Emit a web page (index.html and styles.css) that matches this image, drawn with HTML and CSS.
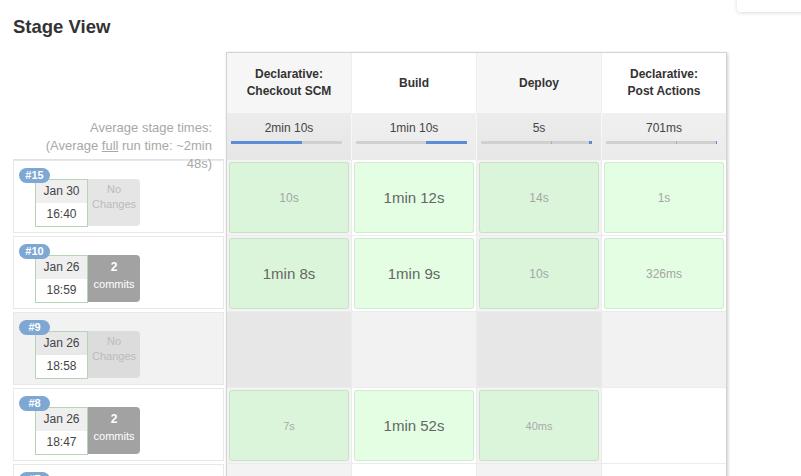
FILE: index.html
```html
<!DOCTYPE html>
<html>
<head>
<meta charset="utf-8">
<link rel="stylesheet" href="styles.css">
</head>
<body>
<div class="corner"></div>
<h2 class="title">Stage View</h2>
<div class="stage-view">
  <div class="jobs">
    <div class="jobs-head"></div>
    <div class="avg-label">Average stage times:<br>(Average <span class="u">full</span> run time: ~2min<br>48s)</div>
    <div class="job">
      <span class="badge">#15</span>
      <div class="build">
        <div class="date"><div class="d">Jan 30</div><div class="t">16:40</div></div>
        <div class="changes none">No<br>Changes</div>
      </div>
    </div>
    <div class="job">
      <span class="badge">#10</span>
      <div class="build">
        <div class="date"><div class="d">Jan 26</div><div class="t">18:59</div></div>
        <div class="changes commits"><b>2</b><br>commits</div>
      </div>
    </div>
    <div class="job grey">
      <span class="badge">#9</span>
      <div class="build">
        <div class="date"><div class="d">Jan 26</div><div class="t">18:58</div></div>
        <div class="changes none">No<br>Changes</div>
      </div>
    </div>
    <div class="job">
      <span class="badge">#8</span>
      <div class="build">
        <div class="date"><div class="d">Jan 26</div><div class="t">18:47</div></div>
        <div class="changes commits"><b>2</b><br>commits</div>
      </div>
    </div>
    <div class="job">
      <span class="badge">#7</span>
    </div>
  </div>

  <div class="table-box">
    <div class="grid">
      <div class="th odd">Declarative:<br>Checkout SCM</div>
      <div class="th">Build</div>
      <div class="th odd">Deploy</div>
      <div class="th last">Declarative:<br>Post Actions</div>

      <div class="avg odd"><div class="avg-t">2min 10s</div><div class="bar"><span class="fill" style="left:0;width:71px"></span></div></div>
      <div class="avg"><div class="avg-t">1min 10s</div><div class="bar"><span class="tick" style="left:70px"></span><span class="fill" style="left:70px;width:41px"></span></div></div>
      <div class="avg odd"><div class="avg-t">5s</div><div class="bar"><span class="tick" style="left:70px"></span><span class="fill" style="left:108px;width:3px"></span></div></div>
      <div class="avg last"><div class="avg-t">701ms</div><div class="bar"><span class="tick" style="left:70px"></span><span class="fill" style="left:110px;width:1px"></span></div></div>

      <div class="td odd"><div class="cell ok"><span class="dur s12">10s</span></div></div>
      <div class="td"><div class="cell ok"><span class="dur s15">1min 12s</span></div></div>
      <div class="td odd"><div class="cell ok"><span class="dur s12">14s</span></div></div>
      <div class="td last"><div class="cell ok"><span class="dur s12">1s</span></div></div>

      <div class="td odd"><div class="cell ok"><span class="dur s15">1min 8s</span></div></div>
      <div class="td"><div class="cell ok"><span class="dur s15">1min 9s</span></div></div>
      <div class="td odd"><div class="cell ok"><span class="dur s12">10s</span></div></div>
      <div class="td last"><div class="cell ok"><span class="dur s12">326ms</span></div></div>

      <div class="td odd grey"></div>
      <div class="td grey"></div>
      <div class="td odd grey"></div>
      <div class="td last grey"></div>

      <div class="td odd"><div class="cell ok"><span class="dur s11">7s</span></div></div>
      <div class="td"><div class="cell ok"><span class="dur s15">1min 52s</span></div></div>
      <div class="td odd"><div class="cell ok"><span class="dur s11">40ms</span></div></div>
      <div class="td last"></div>

      <div class="td odd"></div>
      <div class="td"></div>
      <div class="td odd"></div>
      <div class="td last"></div>
    </div>
  </div>
</div>
</body>
</html>
```

FILE: styles.css
```css
html, body {
  margin: 0;
  padding: 0;
  overflow: hidden;
}

body {
  width: 801px;
  height: 476px;
  background: #fff;
  color: #333;
  font-family: "Liberation Sans", Arial, sans-serif;
  position: relative;
}

.corner {
  position: absolute;
  top: -6px;
  left: 737px;
  width: 90px;
  height: 18px;
  background: #fff;
  border-radius: 0 0 0 4px;
  box-shadow: 0 1px 4px rgba(0, 0, 0, 0.14);
}

.title {
  margin: 0 0 15px 0;
  padding: 16px 0 0 13px;
  font-size: 18.5px;
  line-height: 21px;
  font-weight: bold;
  color: #333;
}

.stage-view {
  display: flex;
  align-items: flex-start;
  gap: 2px;
  padding-left: 13px;
}

/* left jobs column */
.jobs {
  width: 211px;
  flex: none;
}

.jobs-head {
  height: 61px;
}

.avg-label {
  position: relative;
  z-index: 3;
  height: 40px;
  padding: 6px 12px 0 0;
  border-bottom: 1px solid #e2e2e2;
  text-align: right;
  font-size: 13px;
  line-height: 18px;
  color: #a8a8a8;
  white-space: nowrap;
}

.avg-label .u {
  text-decoration: underline;
}

.job {
  position: relative;
  height: 71px;
  border: 1px solid #e8e8e8;
  margin-bottom: 3px;
  background: #fff;
}

.job.grey {
  background: #f2f2f2;
}

.badge {
  position: absolute;
  top: 7px;
  left: 5px;
  z-index: 4;
  min-width: 21px;
  height: 15px;
  padding: 0 5px;
  border-radius: 8px;
  background: #7ea7d3;
  color: #fff;
  font-size: 11px;
  font-weight: bold;
  line-height: 15px;
  text-align: center;
}

.build {
  display: flex;
  margin: 18px 0 0 21px;
}

.date {
  width: 51px;
  border: 1px solid #b5d3b5;
  font-size: 12px;
  color: #444;
  text-align: center;
}

.date .d {
  background: #efefef;
  line-height: 23px;
}

.date .t {
  background: #fff;
  line-height: 23px;
}

.job.grey .date .d {
  background: #e8e8e8;
}

.changes {
  width: 52px;
  height: 47px;
  box-sizing: border-box;
  border-radius: 0 4px 4px 0;
  font-size: 11px;
  text-align: center;
}

.changes.none {
  background: #e5e5e5;
  color: #bbb;
  padding-top: 3px;
  line-height: 15px;
}

.job.grey .changes.none {
  background: #dcdcdc;
}

.changes.commits {
  background: #a2a2a2;
  color: #fff;
  padding-top: 4px;
  line-height: 17px;
}

.changes.commits b {
  font-size: 12px;
}

/* stage table */
.table-box {
  flex: none;
  border: 1px solid #d3d3d3;
  box-shadow: 1px 1px 3px rgba(0, 0, 0, 0.2);
  background: #fff;
}

.grid {
  display: grid;
  grid-template-columns: 125px 125px 125px 124px;
}

.th {
  height: 60px;
  box-sizing: border-box;
  border-right: 1px solid #eeeeee;
  display: flex;
  align-items: center;
  justify-content: center;
  text-align: center;
  font-size: 12px;
  font-weight: bold;
  line-height: 17px;
  color: #333;
  background: #fff;
}

.th.odd {
  background: #f6f6f6;
}

.avg {
  height: 47px;
  box-sizing: border-box;
  border-right: 1px solid #f8f8f8;
  background: linear-gradient(#f0f0f0, #ebebeb);
  padding-top: 8px;
}

.avg.odd {
  background: linear-gradient(#ececec, #e6e6e6);
}

.avg-t {
  text-align: center;
  font-size: 12px;
  line-height: 15px;
  color: #444;
}

.bar {
  position: relative;
  height: 3px;
  margin: 5px 9px 0 4px;
  background: #d0d0d0;
  border-radius: 1px;
}

.bar .fill {
  position: absolute;
  top: 0;
  height: 3px;
  background: #5b8dd6;
}

.bar .tick {
  position: absolute;
  top: 0;
  width: 1px;
  height: 3px;
  background: #b0b0b0;
}

.td {
  height: 76px;
  box-sizing: border-box;
  padding: 2px;
  border-right: 1px solid #ececec;
  border-bottom: 1px solid #ececec;
  background: #fff;
}

.td.odd {
  background: #f3f3f3;
}

.td.grey {
  background: #f2f2f2;
}

.td.odd.grey {
  background: #e7e7e7;
}

.th.last, .avg.last, .td.last {
  border-right: none;
}

.cell {
  height: 100%;
  box-sizing: border-box;
  border: 1px solid rgba(0, 0, 0, 0.08);
  border-radius: 3px;
  display: flex;
  align-items: center;
  justify-content: center;
}

.cell.ok {
  background: #e3fee3;
}

.td.odd .cell.ok {
  background: #dbf5db;
}

.dur {
  white-space: nowrap;
}

.dur.s11 {
  font-size: 11px;
  color: #aaa;
}

.dur.s12 {
  font-size: 12px;
  color: #a5a5a5;
}

.dur.s15 {
  font-size: 15px;
  color: #666;
}
```
